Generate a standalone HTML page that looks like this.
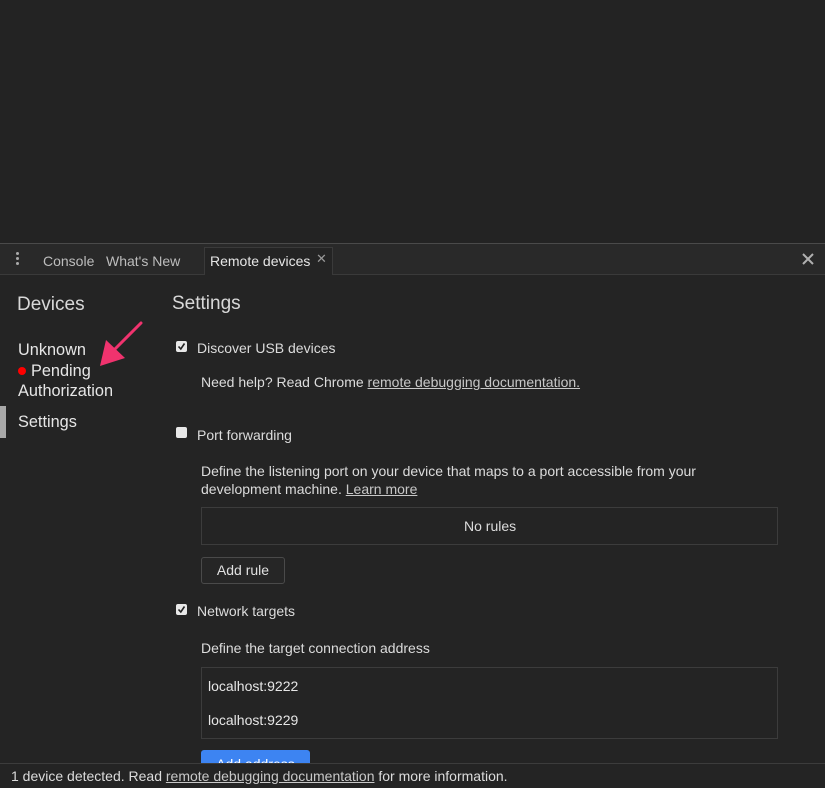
<!DOCTYPE html>
<html><head><style>
*{margin:0;padding:0;box-sizing:border-box}
body{width:825px;height:788px;background:#232323;font-family:"Liberation Sans",sans-serif;position:relative;overflow:hidden;color:#dcdcdc}
.a{position:absolute;white-space:nowrap}
.tabbar{position:absolute;left:0;top:243px;width:825px;height:32px;background:#292929;border-top:1px solid #4a4a4a;border-bottom:1px solid #3a3a3a}
.main{position:absolute;left:0;top:275px;width:825px;height:489px;background:#242424}
.cb{position:absolute;width:11px;height:11px;border-radius:2px;background:#e8e8e8;}
.cb svg{position:absolute;left:1px;top:1px}
u{text-decoration:underline;color:#c8c8c8}
.box{position:absolute;border:1px solid #3c3c3c;background:#242424}
.status{position:absolute;left:0;top:763px;width:825px;height:25px;background:#242424;border-top:1px solid #3c3c3c;font-size:14px;color:#dcdcdc;padding:4px 0 0 11px}
</style></head><body>
<div class="tabbar">
  <div class="a" style="left:16px;top:8px;width:3px;height:3px;background:#aaa;border-radius:50%;box-shadow:0 5px 0 #aaa,0 10px 0 #aaa"></div>
  <div class="a" style="left:43px;top:9px;font-size:14px;color:#bdbdbd">Console</div>
  <div class="a" style="left:106px;top:9px;font-size:14px;color:#bdbdbd">What's New</div>
  <div class="a" style="left:204px;top:3px;width:129px;height:28px;background:#242424;border:1px solid #3a3a3a;border-bottom:none"></div>
  <div class="a" style="left:210px;top:9px;font-size:14px;color:#e6e6e6">Remote devices</div>
  <div class="a" style="left:316px;top:7px;font-size:13px;color:#999">✕</div>
  <svg class="a" style="left:802px;top:9px" width="12" height="12"><path d="M1 1L11 11M11 1L1 11" stroke="#b0b0b0" stroke-width="2"/></svg>
</div>
<div class="main"></div>
<div class="a" style="left:17px;top:294px;font-size:19px;color:#d8d8d8">Devices</div>
<div class="a" style="left:172px;top:293px;font-size:19px;color:#d8d8d8">Settings</div>
<div class="a" style="left:18px;top:340px;font-size:16.3px;line-height:20.5px;color:#e6e6e6">Unknown<br><span style="display:inline-block;width:8px;height:8px;border-radius:50%;background:#f00;margin-right:5px;vertical-align:1px"></span>Pending<br>Authorization</div>
<div class="a" style="left:0;top:406px;width:6px;height:32px;background:#a8a8a8"></div>
<div class="a" style="left:18px;top:413px;font-size:16.3px;color:#e6e6e6">Settings</div>
<svg class="a" style="left:98px;top:320px" width="46" height="48"><path d="M43 3L16 30" stroke="#f0336e" stroke-width="3" fill="none" stroke-linecap="round"/><path d="M2 46L8 20L27 38Z" fill="#f0336e"/></svg>
<div class="cb" style="left:176px;top:341px"><svg width="9" height="9"><path d="M1.5 4.5L3.8 7L7.5 1.5" stroke="#222" stroke-width="1.6" fill="none"/></svg></div>
<div class="a" style="left:197px;top:340px;font-size:14px;color:#dcdcdc">Discover USB devices</div>
<div class="a" style="left:201px;top:374px;font-size:14px;color:#dcdcdc">Need help? Read Chrome <u>remote debugging documentation.</u></div>
<div class="cb" style="left:176px;top:427px"></div>
<div class="a" style="left:197px;top:427px;font-size:14px;color:#dcdcdc">Port forwarding</div>
<div class="a" style="left:201px;top:463px;font-size:14px;line-height:17.5px;color:#dcdcdc">Define the listening port on your device that maps to a port accessible from your<br>development machine. <u>Learn more</u></div>
<div class="box" style="left:201px;top:507px;width:577px;height:38px"></div>
<div class="a" style="left:464px;top:518px;font-size:14px;color:#dcdcdc">No rules</div>
<div class="a" style="left:201px;top:557px;width:84px;height:27px;border:1px solid #4a4a4a;border-radius:3px;background:#262626;font-size:14px;text-align:center;line-height:25px;color:#e0e0e0">Add rule</div>
<div class="cb" style="left:176px;top:604px"><svg width="9" height="9"><path d="M1.5 4.5L3.8 7L7.5 1.5" stroke="#222" stroke-width="1.6" fill="none"/></svg></div>
<div class="a" style="left:197px;top:603px;font-size:14px;color:#dcdcdc">Network targets</div>
<div class="a" style="left:201px;top:640px;font-size:14px;color:#dcdcdc">Define the target connection address</div>
<div class="box" style="left:201px;top:667px;width:577px;height:72px"></div>
<div class="a" style="left:208px;top:678px;font-size:14px;color:#e6e6e6">localhost:9222</div>
<div class="a" style="left:208px;top:712px;font-size:14px;color:#e6e6e6">localhost:9229</div>
<div class="a" style="left:201px;top:750px;width:109px;height:30px;background:#3d84f2;border-radius:3px;color:#fff;font-size:14px;text-align:center;line-height:28px">Add address</div>
<div class="status">1 device detected. Read <u>remote debugging documentation</u> for more information.</div>
</body></html>
